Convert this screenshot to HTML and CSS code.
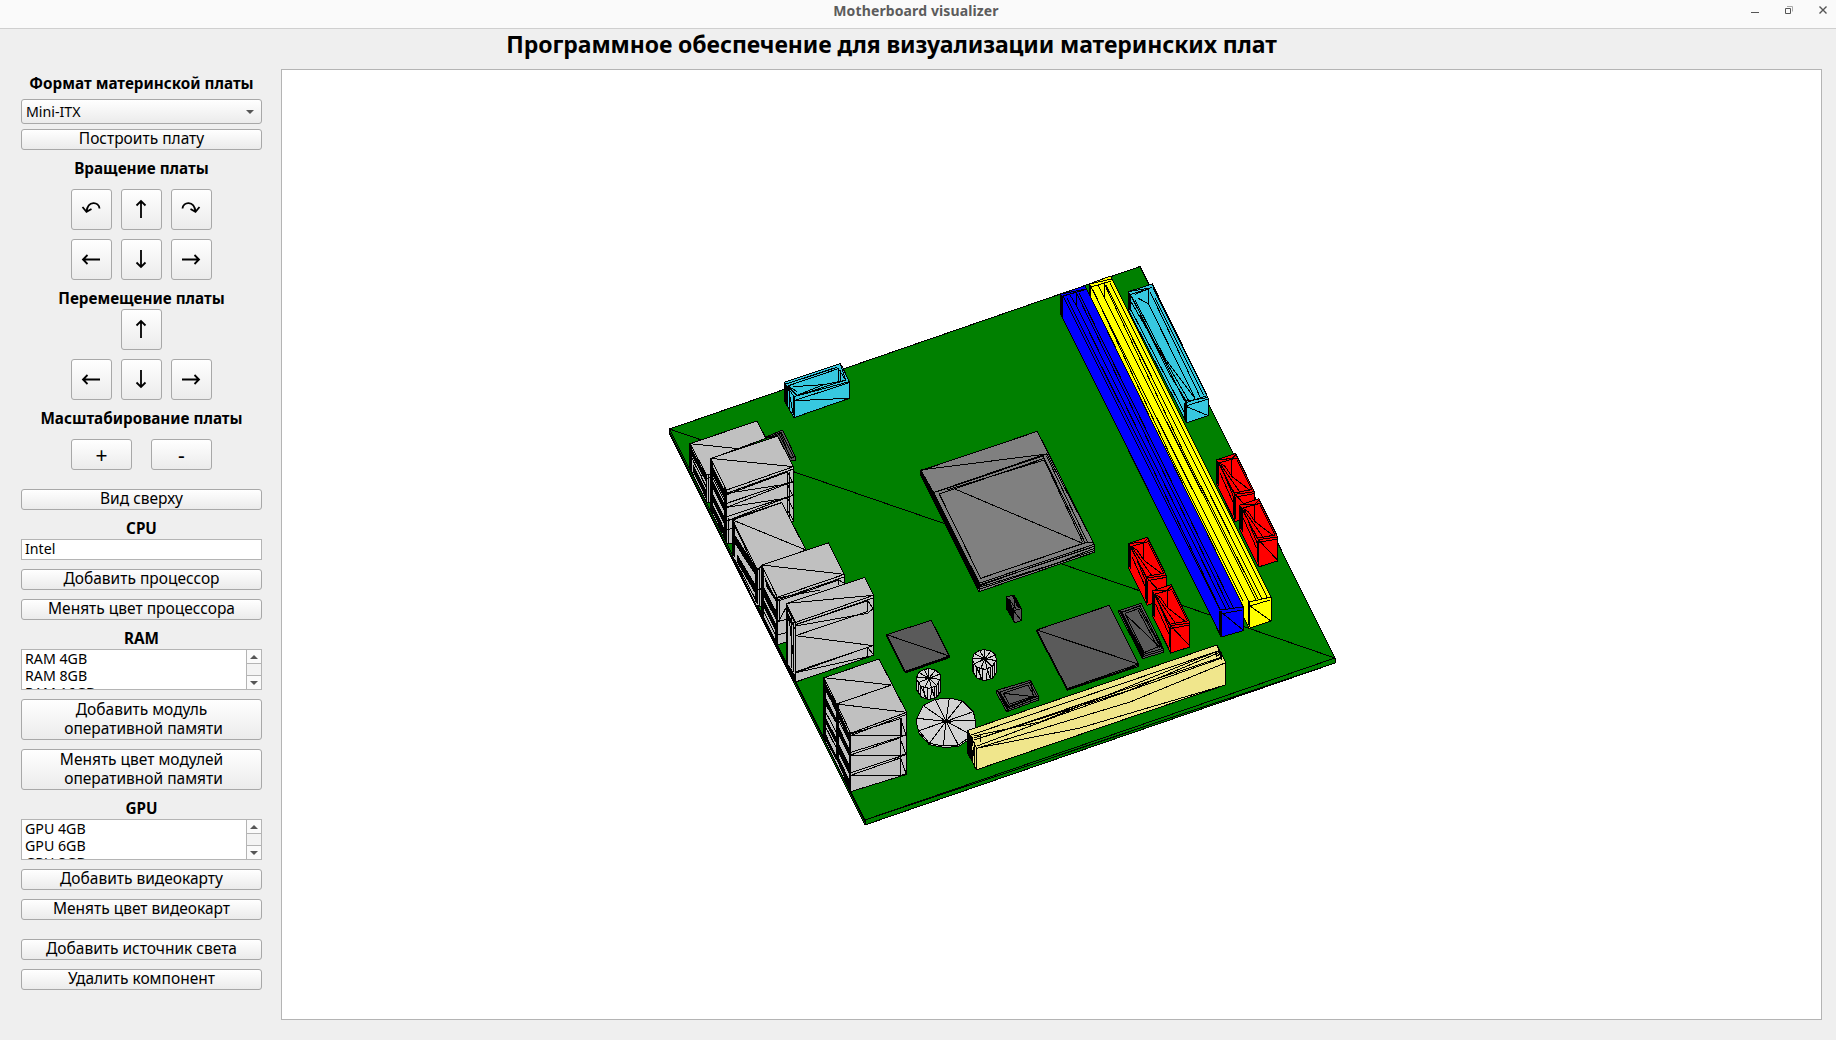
FILE: index.html
```html
<!DOCTYPE html>
<html lang="ru">
<head>
<meta charset="utf-8">
<title>Motherboard visualizer</title>
<link rel="stylesheet" href="styles.css">
</head>
<body>
<svg class="defs" width="0" height="0">
  <defs>
    <symbol id="i-up" viewBox="0 0 20 20"><path d="M10 19V2M5.5 6.500L10 2l4.500 4.500"/></symbol>
    <symbol id="i-down" viewBox="0 0 20 20"><path d="M10 1V18M5.500 13.500L10 18l4.500-4.500"/></symbol>
    <symbol id="i-left" viewBox="0 0 20 20"><path d="M19 10.500H2M6.500 6L2 10.500l4.500 4.500"/></symbol>
    <symbol id="i-right" viewBox="0 0 20 20"><path d="M1 10.500H18M13.500 6l4.500 4.500-4.500 4.500"/></symbol>
    <symbol id="i-ccw" viewBox="0 0 20 20"><path d="M18.500 9.500C18 2.500 7 1 5.500 12.500M1.500 8L5.500 12.800L10.500 10"/></symbol>
    <symbol id="i-cw" viewBox="0 0 20 20"><path d="M1.500 9.500C2 2.500 13 1 14.500 12.500M18.500 8L14.500 12.800L9.500 10"/></symbol>
  </defs>
</svg>

<header class="titlebar">
  <span class="window-title">Motherboard visualizer</span>
  <svg class="window-buttons" width="80" height="16" viewBox="0 0 80 16">
    <path d="M1 9.500h8" stroke="#555"/>
    <path d="M37 3.500h5.500v5" stroke="#aaa"/>
    <path d="M35.500 5.500h5v5h-5z" stroke="#555"/>
    <path d="M69.500 3.500l7 7M76.500 3.500l-7 7" stroke="#555" stroke-width="1.400"/>
  </svg>
</header>
<h1 class="heading"><span>Программное обеспечение для визуализации материнских плат</span></h1>

<main class="workspace">
  <aside class="sidebar">
    <h2>Формат материнской платы</h2>
    <div class="combo"><span>Mini-ITX</span><i class="tri down"></i></div>
    <button class="btn build">Построить плату</button>

    <h2 class="l-rotate">Вращение платы</h2>
    <div class="pad">
      <button><svg><use href="#i-ccw"/></svg></button>
      <button><svg><use href="#i-up"/></svg></button>
      <button><svg><use href="#i-cw"/></svg></button>
      <button><svg><use href="#i-left"/></svg></button>
      <button><svg><use href="#i-down"/></svg></button>
      <button><svg><use href="#i-right"/></svg></button>
    </div>

    <h2 class="l-move">Перемещение платы</h2>
    <div class="pad move">
      <button class="mid"><svg><use href="#i-up"/></svg></button>
      <button><svg><use href="#i-left"/></svg></button>
      <button><svg><use href="#i-down"/></svg></button>
      <button><svg><use href="#i-right"/></svg></button>
    </div>

    <h2 class="l-zoom">Масштабирование платы</h2>
    <div class="zoom"><button>+</button><button>-</button></div>
    <button class="btn top-view">Вид сверху</button>

    <h2 class="l-cpu">CPU</h2>
    <div class="list single"><div class="rows"><span>Intel</span></div></div>
    <button class="btn">Добавить процессор</button>
    <button class="btn">Менять цвет процессора</button>

    <h2 class="l-list">RAM</h2>
    <div class="list">
      <div class="rows"><span>RAM 4GB</span><span>RAM 8GB</span><span>RAM 16GB</span></div>
      <div class="scroll"><b><i class="tri up"></i></b><b></b><b><i class="tri down"></i></b></div>
    </div>
    <button class="btn tall">Добавить модуль<br>&nbsp;оперативной памяти</button>
    <button class="btn tall">Менять цвет модулей<br>&nbsp;оперативной памяти</button>

    <h2 class="l-list">GPU</h2>
    <div class="list">
      <div class="rows"><span>GPU 4GB</span><span>GPU 6GB</span><span>GPU 8GB</span></div>
      <div class="scroll"><b><i class="tri up"></i></b><b></b><b><i class="tri down"></i></b></div>
    </div>
    <button class="btn">Добавить видеокарту</button>
    <button class="btn">Менять цвет видеокарт</button>
    <button class="btn light">Добавить источник света</button>
    <button class="btn">Удалить компонент</button>
  </aside>

  <section class="canvas">
    <svg class="scene" width="1539" height="949" viewBox="282 70 1539 949">
      <defs>
        <g id="power">
          <path class="red" d="M0 0L57-19L113 96V168L55 186L0 74z"/>
          <path class="blk" d="M0 0L8 10V82L0 68zM50 108L57 112V180L50 165z"/>
          <path d="M0 0L45-3L57-15L113 96L55 104L5 10L60-5M55 104V184M55 104L113 166M50 100L105 90M45-3V50L100 92M45 50L25 20L8 10M12 15L70 98M10 40L50 130M25 50L52 115M60 0L105 90M8 12L50 98M57 112L113 102"/>
        </g>
      </defs>

      <!-- board -->
      <g class="board">
        <path class="green" d="M669.500 429L1140 266.500L1335 658V663L865 825L669.500 434z"/>
        <path d="M669.500 429L865 820L1335 658M865 820V825M669.500 429L1335 658M669.500 432L865 822M865 820L1335 663M669.500 434L865 820"/>
      </g>

      <g transform="translate(660 350) scale(.33333)">
        <!-- audio header -->
        <path class="cyan" d="M373 97L541 41L549 55L568 95V145L402 203L373 152z"/>
        <path class="blk" d="M373 97L383 108L385 165L373 152zM398 140h6v63l-6-12z"/>
        <path d="M373 97L402 140L568 95M402 152L568 98M383 108L535 56L557 90L412 137zM535 56V95M541 60V92M400 110L490 104L535 95M402 152L568 145M383 108V165M390 112V180M385 112L400 195M541 41L557 90M402 140L490 104M383 108L412 125M373 104L530 52"/>
        <!-- chip behind the ports -->
        <path class="dark" d="M316 262L368 240L406 320V331L390 331L353 258z"/>
        <path d="M320 264L364 247L402 325M326 264L358 254L394 326M362 250L390 322M390 322L406 320"/>
        <!-- rear port 1 -->
        <path class="gray" d="M90 281L291 213L318 265L155 325V460L138 455L90 355z"/>
        <path class="blk" d="M90 281L97 286L97 365L90 352zM97 300L140 378V400L97 320zM100 345L140 425V450L100 368z"/>
        <path d="M90 281L235 296L318 265M90 281L140 375V455M140 375L155 370M146 375V455M97 325L138 410M100 335L125 380M140 385L155 380"/>
        <!-- rear port 2 -->
        <path class="gray" d="M152 325L353 258L400 350V515L218 580L200 580L152 480z"/>
        <path class="blk" d="M152 325L158 335V490L152 480zM193 410L201 420V580L193 565zM158 350L193 420V445L158 375zM158 390L193 460V485L158 415zM158 430L193 500V525L158 455zM158 462L193 535V562L158 485z"/>
        <path d="M152 325L400 350L200 420L152 325M200 430L400 357M200 434L382 366L400 400M382 366V505M388 366V500M400 350V515M200 430L382 402L400 394L200 472M200 460L390 396M200 472L382 444L400 435L200 513M200 500L390 438M200 513L366 457M382 402L400 440M382 444L400 480M382 480L400 510M200 540L218 535M206 505V580M152 345L200 440M152 370L200 465M158 400L200 485M158 440L200 525"/>
      </g>

      <g transform="translate(720 490) scale(.33333)">
        <!-- rear port 3 -->
        <path class="gray" d="M38 90L185 38L258 180L125 228V350L108 345L38 200z"/>
        <path class="blk" d="M38 90L45 96V205L38 192zM45 135L110 235V262L45 162zM50 190L110 290V318L50 215zM106 235h8v110l-8-10z"/>
        <path d="M38 90L258 180M38 90L112 240L125 228M45 110L110 245M45 210L110 335M55 170L105 250M119 235V350M112 300L125 296"/>
        <!-- rear port 4 -->
        <path class="gray" d="M125 225L325 159L373 253V290L200 345V455L172 465L125 370z"/>
        <path class="blk" d="M125 225L132 235V385L125 370zM132 255L168 325V335L140 292zM132 292L170 365V395L132 320zM132 330L170 405V430L132 355zM168 320h6v145l-8-15z"/>
        <path d="M125 225L373 253L172 322L125 225M172 330L373 261M172 334L356 270V285M356 270L373 280M172 324L300 300M172 395L200 388M172 400L200 350M172 435L200 428M180 332V395M132 365L172 445"/>
        <!-- rear port 5 -->
        <path class="gray" d="M200 340L434 262L460 315V496L227 576L200 525z"/>
        <path class="blk" d="M200 340L228 397V408L200 355zM200 515L228 560V576L200 530zM202 370L212 385V400L202 388z"/>
        <path d="M200 340L460 316L227 397M227 397V576M200 340V525M204 350V530M215 385V535M220 395L222 545M208 390L222 520M227 404L460 324M227 404L443 332V364M443 332L460 357M227 408L443 370L460 355M227 437L443 364M227 437L460 467L227 545M227 548L443 472V500M443 472L460 494M227 548L443 500M460 316V496M200 365L227 420"/>
        <!-- square chip -->
        <path class="dark" d="M500 434L634 391L688 498V503L556 549L500 438z"/>
        <path d="M500 434L688 498L556 544L500 434M556 546L688 501"/>
      </g>

      <g transform="translate(800 640) scale(.33333)">
        <!-- rear port 6 -->
        <path class="gray" d="M72 113L237 57L320 217V403L152 455L72 298z"/>
        <path class="blk" d="M72 113L79 122V310L72 298zM108 192h8v180l-8-15zM148 275h5v180l-5-12zM79 135L108 192V212L79 158zM79 175L108 235V250L79 200zM79 235L108 292V310L79 255zM79 285L108 345V360L79 305zM116 210L150 285V305L116 235zM116 260L148 325V350L116 285zM116 310L148 375V405L116 335zM116 350L148 420V445L116 375z"/>
        <path d="M72 113L274 135L110 192L320 217L152 280L110 192L72 113M152 287L320 223M301 235V410M306 235V290M301 235L318 285M301 296L318 345M301 352L318 400M152 286H310M152 282L301 236M152 337L320 285M152 345L301 293M152 347H301L320 340M152 398L320 343M152 406L301 354M152 407H301L320 400M320 217V403M79 150L148 300M79 220L108 275M79 265L148 400M116 240L148 305"/>
        <!-- capacitors -->
        <g id="cap">
          <path class="lite" d="M350 112L356 97L372 88L387 86L406 90L420 102L422 118V155L410 172L387 179L365 172L350 150z"/>
          <path d="M350 118L362 138L387 145L410 137L422 115M387 115L350 112M387 115L356 97M387 115L372 88M387 115V86M387 115L406 90M387 115L420 102M387 115L422 118M387 115L410 137M387 115L395 144M387 115L375 143M387 115L355 128M355 128V160M362 138V170M370 142L376 176M382 144V178M395 144L392 178M404 142V175M410 137V170M416 130V162M362 138L380 176M395 144L404 174"/>
          <path class="blk" d="M376 112h22v6h-22z"/>
        </g>
        <use href="#cap" x="167" y="-57"/>
        <path class="lite" d="M351 235L370 197L405 178L448 174L487 183L520 215L526 240V270L505 300L475 320L430 322L388 314L357 280L351 255z"/>
        <path d="M438 244L351 235M438 244L370 197M438 244L405 178M438 244L448 174M438 244L487 183M438 244L520 215M438 244L526 240M438 244L515 285M438 244L475 315M438 244L430 318M438 244L388 310M438 244L357 272M357 272L388 310L430 318L475 315L505 294"/>
        <path class="blk" d="M426 240h26v8h-26z"/>
        <!-- small framed chip -->
        <path class="dark" d="M590 151L692 121L716 168V180L620 215L590 160z"/>
        <path class="blk" d="M590 151L600 156L628 200L622 213z"/>
        <path d="M600 156L688 128L710 168L624 200zM610 160L684 135L702 168L628 193zM610 160L702 170M716 168L622 204M716 174L622 209M692 121L700 170"/>
      </g>

      <!-- graphics slot -->
      <g>
        <path class="khaki" d="M967.700 730.500L1216.700 645L1225.300 661.700V685L976.700 769.700L967.700 753.300z"/>
        <path class="blk" d="M967.700 732L972 737L973 763L968 753z"/>
        <path d="M967.700 730.500L976.700 748.300V769.700M972 737L975 765M974.500 742V768M971 735L1218 651L1222 657L974 740M974 740L1130 690L1218 653M974 736L1040 722L1218 651M976.700 748.300L1130 702L1225 663M977 746L1060 715L1222 658M976.700 748.300L1080 728L1225.300 685M1216 652V657L1222 652M1217 645L1222 660M974 738L980 736V742"/>
      </g>

      <g transform="translate(900 420) scale(.33333)">
        <!-- processor socket -->
        <path class="mid" d="M62 152L412 34L583 373V397L237 515L62 165z"/>
        <path class="blk" d="M62 152L66 154L105 222L240 490V515L230 500L62 168z"/>
        <path d="M62 150L440 102M100 218L440 101L583 373L237 490L100 218M118 222L433 115L555 368L242 475zM107 216L430 108V117M140 210L433 120M440 108L562 366M433 120L548 366M165 207L548 370M237 495L583 379M237 502L470 430L583 385M237 508L583 392M242 475L560 367L583 367M237 498L400 440L570 384"/>
        <!-- processor power plug -->
        <path class="dark" d="M319 530L343 526L364 566V602L345 608L319 565z"/>
        <path class="blk" d="M319 530L328 538L340 570V600L319 565zM336 528L344 528L362 566L352 562z"/>
        <path d="M341 572L364 566M341 572V605M341 572L364 602M328 538L350 570M345 535L341 572"/>
      </g>

      <g transform="translate(1010 560) scale(.33333)">
        <!-- chipset -->
        <path class="dark" d="M80 210L298 136L385 312V320L172 391L80 215z"/>
        <path d="M80 210L385 312L172 386L80 210M172 389L385 316"/>
        <!-- battery frame -->
        <path class="dark" d="M327 152L394 130L460 265V277L398 296L327 160z"/>
        <path class="blk" d="M327 152L336 153L402 282L398 295z"/>
        <path d="M345 160L388 145L450 258L402 278zM338 156L390 138L456 265M345 162L450 262M460 265L398 284M460 271L398 290M384 150L444 262M330 158L394 136M402 278L450 258"/>
        <use href="#power" x="356" y="-50"/>
        <use href="#power" x="427" y="93"/>
      </g>

      <g transform="translate(1180 440) scale(.33333)">
        <use href="#power" x="110" y="59"/>
        <use href="#power" x="180" y="195"/>
      </g>

      <!-- memory slots -->
      <g>
        <path class="yellow" d="M1089 284L1110.700 276L1271 597V621L1249.300 628.300L1089 304z"/>
        <path class="blk" d="M1089 284L1091 286V302L1089 299zM1248 602h2v26l-2-4z"/>
        <path d="M1089 284L1112 279M1091 287L1111 281M1091 287L1249 602L1271 597M1250 606L1270 600M1250 606L1271 621M1098 285L1104 297V283M1093 290L1170 455L1243 601M1104 283L1185 455L1258 599M1106 285L1262 599M1110 283L1267 597M1104 297L1256 600"/>
      </g>
      <g>
        <path class="blue" d="M1060.700 294L1085 285.700L1243.300 607V630.700L1221.300 637L1060.700 314z"/>
        <path class="blk" d="M1060.700 294L1063 296V318L1060.700 314zM1219 611h2.500v26l-2.500-5z"/>
        <path d="M1061 294L1086 289M1063 296L1084 290M1063 296L1220 610L1243 607M1221 614L1242 610M1221 612L1243 630M1067 298L1150 463L1220 609M1076 305V292M1076 292L1155 455L1230 609M1079 293L1234 609M1070 295L1076 305L1226 609"/>
      </g>

      <!-- main power connector -->
      <g transform="translate(1040 255) scale(.33333)">
        <path class="cyan" d="M265 110L337 87L505 430V482L440 503L433 490L265 165z"/>
        <path class="blk" d="M265 110L273 118V170L265 163zM433 443h7v60l-7-12z"/>
        <path d="M265 110L335 98M273 118L330 100M272 120L437 443L500 422M440 452L505 432M440 455L505 482M295 130L325 146V102L285 118M325 146L465 430M273 140L445 435M285 135L375 310L465 430M340 100L500 420M330 110L480 425M345 130L490 420M300 180L390 360L440 440M273 165L432 470M440 438L500 428"/>
      </g>
    </svg>
  </section>
</main>
</body>
</html>
```
FILE: styles.css
```css
* { box-sizing: border-box; }

body {
  margin: 0;
  width: 1836px;
  height: 1040px;
  overflow: hidden;
  background: #efefef;
  color: #000;
  font: 16px "Noto Sans", "Open Sans", sans-serif;
}

.defs { position: absolute; }

.titlebar {
  display: grid;
  grid-template-columns: 1fr auto 1fr;
  height: 29px;
  padding: 1px 6px 0 0;
  background: #fafafa;
  border-bottom: 1px solid #cfcfcf;
}
.window-title {
  grid-column: 2;
  margin-left: 2px;
  font-size: 14px;
  font-weight: 700;
  line-height: 20px;
  color: #5c5c5c;
  letter-spacing: .12px;
}
.window-buttons { justify-self: end; margin-top: 2px; fill: none; }

.heading {
  margin: 0;
  height: 40px;
  padding-right: 53px;
  text-align: center;
  font-size: 23px;
  line-height: 30px;
  letter-spacing: -.09px;
}

.workspace { display: flex; }

.sidebar {
  display: flex;
  flex-direction: column;
  width: 281px;
  padding: 6px 19px 0 21px;
}
.sidebar h2 {
  margin: 0;
  height: 20px;
  font-size: 15.25px;
  line-height: 17px;
  text-align: center;
  white-space: nowrap;
}

button {
  padding: 0;
  border: 1px solid #a8a8a8;
  border-radius: 3px;
  background: linear-gradient(#fff, #ebebeb);
  color: #000;
  font: 15.5px/17px "Noto Sans", "Open Sans", sans-serif;
  white-space: nowrap;
}
.btn { height: 21px; margin-top: 9px; padding-bottom: 2px; }
.btn.tall { height: 41px; line-height: 19px; }
.btn.build { margin-top: 5px; }
.btn.top-view, .btn.light { margin-top: 19px; }

.combo {
  display: flex;
  align-items: center;
  justify-content: space-between;
  height: 25px;
  margin-top: 4px;
  padding: 0 7px 0 4px;
  border: 1px solid #a8a8a8;
  border-radius: 3px;
  background: linear-gradient(#fff, #ebebeb);
  font-size: 14.2px;
}

.tri { border: 4px solid transparent; }
.tri.down { border-top-color: #555; border-bottom: 0; }
.tri.up { border-bottom-color: #555; border-top: 0; }

.sidebar .l-rotate { margin-top: 10px; }
.sidebar .l-move { margin-top: 10px; height: 19px; }
.sidebar .l-zoom { margin-top: 10px; }
.sidebar .l-cpu { margin-top: 10px; height: 19px; }
.sidebar .l-list { margin-top: 10px; height: 19px; }

.pad {
  display: grid;
  grid-template-columns: repeat(3, 41px);
  grid-auto-rows: 41px;
  gap: 9px;
  justify-content: center;
  margin-top: 9px;
}
.pad.move { margin-top: 0; }
.pad.move button { grid-row: 2; }
.pad.move .mid { grid-column: 2; grid-row: 1; }
.pad button { display: flex; align-items: center; justify-content: center; padding: 0 1px 1px 0; }
.pad svg {
  width: 20px;
  height: 20px;
  fill: none;
  stroke: #000;
  stroke-width: 1.8;
}

.zoom { display: flex; gap: 19px; justify-content: center; margin-top: 9px; }
.zoom button { width: 61px; height: 31px; font-size: 21px; line-height: 28px; }

.list {
  display: flex;
  height: 41px;
  border: 1px solid #b4b4b4;
  background: #fff;
  overflow: hidden;
}
.list.single { height: 21px; }
.rows { flex: 1; padding-left: 3px; font-size: 14.2px; line-height: 17px; }
.rows span { display: block; }
.scroll {
  display: grid;
  grid-template-rows: 13px 13px 13px;
  width: 15px;
  border-left: 1px solid #b4b4b4;
  background: #fafafa;
}
.scroll b { display: flex; align-items: center; justify-content: center; padding-right: 1px; }
.scroll b:nth-child(2) { border: solid #b4b4b4; border-width: 1px 0; background: #f3f3f3; }

.canvas { width: 1541px; height: 951px; border: 1px solid #b4b4b4; background: #fff; }

.scene { display: block; shape-rendering: crispEdges; }
.scene path { fill: none; stroke: #000; stroke-width: 1px; vector-effect: non-scaling-stroke; }
.scene .green { fill: #008000; }
.scene .cyan { fill: #37c8e0; }
.scene .gray { fill: #c0c0c0; }
.scene .lite { fill: #d3d3d3; }
.scene .mid { fill: #808080; }
.scene .dark { fill: #5a5a5a; }
.scene .khaki { fill: #f0e68c; }
.scene .red { fill: #f00; }
.scene .yellow { fill: #ff0; }
.scene .blue { fill: #00f; }
.scene .blk { fill: #000; stroke: none; }
```
